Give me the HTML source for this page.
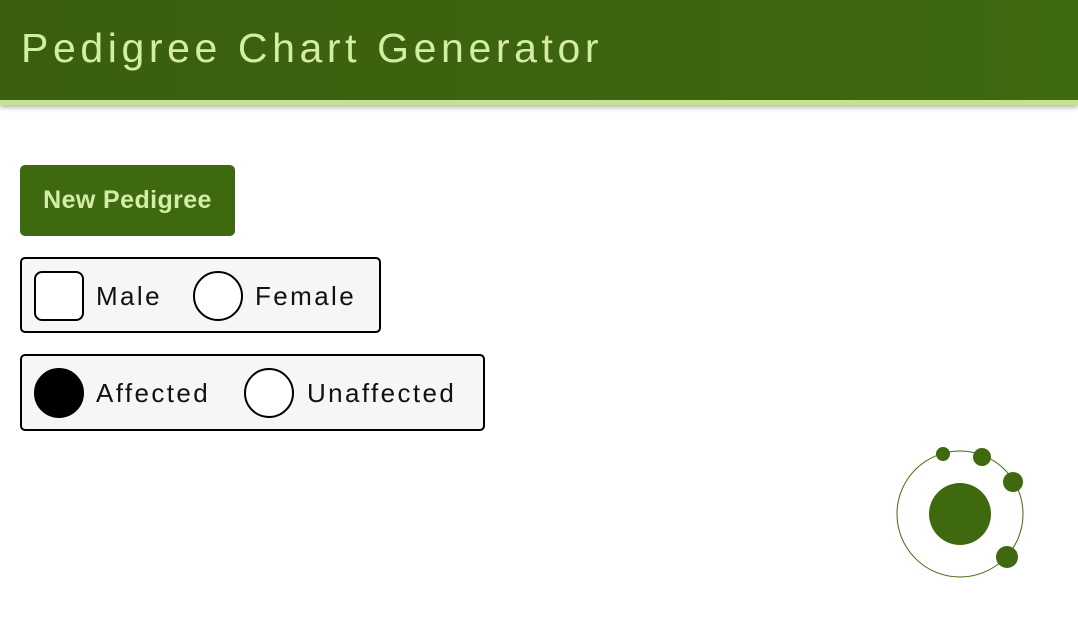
<!DOCTYPE html>
<html><head><style>
body{margin:0;width:1078px;height:635px;background:#fff;font-family:"Liberation Sans",sans-serif;overflow:hidden;position:relative}
.hdr{position:absolute;left:0;top:0;width:1078px;height:100px;background:linear-gradient(90deg,#3a5e0d,#3f690f);border-bottom:5px solid #c5e193;box-shadow:0 3px 4px rgba(0,0,0,.25)}
.hdr h1{margin:0;position:absolute;left:21px;top:25px;font-weight:normal;font-size:41px;color:#d3eda6;letter-spacing:4.6px;white-space:nowrap}
.btn{position:absolute;left:20px;top:165px;width:215px;height:71px;background:#3f690f;border-radius:5px;color:#d3eda6;font-weight:bold;font-size:25px;letter-spacing:0.4px;line-height:71px;text-align:center}
.box{position:absolute;left:20px;height:74px;border:2px solid #000;border-radius:5px;background:#f6f6f6;box-sizing:border-box}
.lbl{position:absolute;font-size:26px;color:#111;top:22px;letter-spacing:2.4px;white-space:nowrap}
.sh{position:absolute;top:12px;width:50px;height:50px;box-sizing:border-box;border:2px solid #000;background:#fff}
</style></head><body>
<div class="hdr"><h1>Pedigree Chart Generator</h1></div>
<div class="btn">New Pedigree</div>
<div class="box" style="top:257px;width:361px;height:76px">
 <div class="sh" style="left:12px;border-radius:8px"></div><span class="lbl" style="left:74px">Male</span>
 <div class="sh" style="left:171px;border-radius:50%"></div><span class="lbl" style="left:233px">Female</span>
</div>
<div class="box" style="top:354px;width:465px;height:77px">
 <div class="sh" style="left:12px;border-radius:50%;background:#000"></div><span class="lbl" style="left:74px">Affected</span>
 <div class="sh" style="left:222px;border-radius:50%"></div><span class="lbl" style="left:285px">Unaffected</span>
</div>
<svg style="position:absolute;left:0;top:0" width="1078" height="635">
<circle cx="960" cy="514" r="63" fill="none" stroke="#3f690f" stroke-width="1"/>
<circle cx="960" cy="514" r="31" fill="#3f690f"/>
<circle cx="943" cy="454" r="7" fill="#3f690f"/>
<circle cx="982" cy="457" r="9" fill="#3f690f"/>
<circle cx="1013" cy="482" r="10" fill="#3f690f"/>
<circle cx="1007" cy="557" r="11" fill="#3f690f"/>
</svg>
</body></html>
